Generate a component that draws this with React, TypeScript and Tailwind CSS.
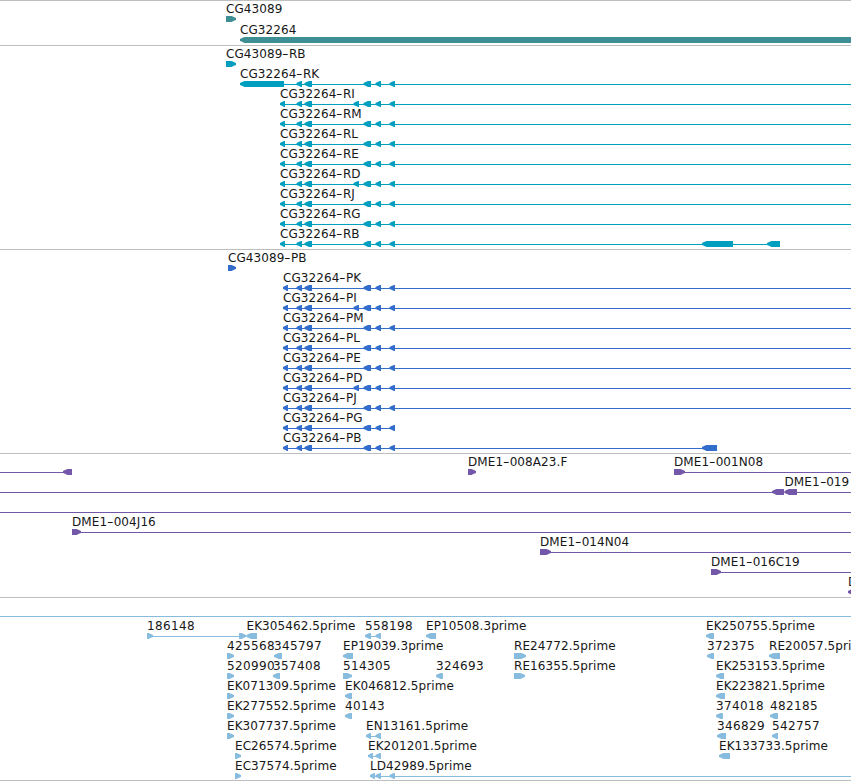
type Direction = "left" | "right";

interface Feature {
  name?: string;
  start: number;
  end?: number;
  direction?: Direction;
  blocks: [number, number][];
}

interface Track {
  id: string;
  color: string;
  rowClass: string;
  trackClass: string;
  rows: Feature[][];
}

const VIEW_WIDTH = 851;

const left = (name: string, ...blocks: [number, number][]): Feature => ({
  name,
  start: blocks[0][0],
  end: blocks[blocks.length - 1][1],
  direction: "left",
  blocks,
});

const right = (name: string, ...blocks: [number, number][]): Feature => ({
  name,
  start: blocks[0][0],
  end: blocks[blocks.length - 1][1],
  direction: "right",
  blocks,
});

// keeps the intron line going past the last visible block
const open = (feature: Feature): Feature => ({ ...feature, end: VIEW_WIDTH });

const line = (start: number, end: number): Feature => ({ start, end, blocks: [] });

const innerExons: [number, number][] = [
  [296.5, 302],
  [304.5, 312],
];
const outerExons: [number, number][] = [
  [363.5, 371],
  [375.5, 381],
  [389.5, 395],
];
const extraExon: [number, number] = [353.5, 359];

const mrna = (name: string) => open(left(name, [280, 285], ...innerExons, ...outerExons));
const mrnaExtra = (name: string) =>
  open(left(name, [280, 285], ...innerExons, extraExon, ...outerExons));
const cds = (name: string) => open(left(name, [283, 288], ...innerExons, ...outerExons));
const cdsExtra = (name: string) =>
  open(left(name, [283, 288], ...innerExons, extraExon, ...outerExons));

const tracks: Track[] = [
  {
    id: "gene",
    color: "text-[#3d8f93]",
    rowClass: "h-[21px]",
    trackClass: "pb-[2px]",
    rows: [[right("CG43089", [226, 236])], [left("CG32264", [240, 860])]],
  },
  {
    id: "mrna",
    color: "text-[#009fbf]",
    rowClass: "h-5",
    trackClass: "pb-[3px]",
    rows: [
      [right("CG43089-RB", [226, 236])],
      [open(left("CG32264-RK", [240, 284], ...innerExons, ...outerExons))],
      [mrnaExtra("CG32264-RI")],
      [mrna("CG32264-RM")],
      [mrna("CG32264-RL")],
      [mrna("CG32264-RE")],
      [mrnaExtra("CG32264-RD")],
      [mrna("CG32264-RJ")],
      [mrna("CG32264-RG")],
      [left("CG32264-RB", [280, 285], ...innerExons, ...outerExons, [702, 733], [767, 780])],
    ],
  },
  {
    id: "cds",
    color: "text-[#326dcc]",
    rowClass: "h-5",
    trackClass: "pb-[3px]",
    rows: [
      [right("CG43089-PB", [228, 236])],
      [cds("CG32264-PK")],
      [cdsExtra("CG32264-PI")],
      [cds("CG32264-PM")],
      [cds("CG32264-PL")],
      [cds("CG32264-PE")],
      [cdsExtra("CG32264-PD")],
      [cds("CG32264-PJ")],
      [left("CG32264-PG", [283, 288], ...innerExons, ...outerExons)],
      [left("CG32264-PB", [283, 288], ...innerExons, ...outerExons, [702, 717])],
    ],
  },
  {
    id: "clones",
    color: "text-[#7357a8]",
    rowClass: "h-5",
    trackClass: "pb-[3px]",
    rows: [
      [
        { start: 0, end: 72, direction: "left", blocks: [[63, 72]] },
        right("DME1-008A23.F", [468, 476]),
        open(right("DME1-001N08", [674, 685])),
      ],
      [
        { start: 0, end: 784, direction: "left", blocks: [[772, 784]] },
        open(left("DME1-019", [784.5, 797])),
      ],
      [line(0, VIEW_WIDTH)],
      [open(right("DME1-004J16", [72, 81]))],
      [open(right("DME1-014N04", [540, 551]))],
      [open(right("DME1-016C19", [711, 721]))],
      [left("D", [848, 860])],
    ],
  },
  {
    id: "est",
    color: "text-[#88bcde]",
    rowClass: "h-5",
    trackClass: "pb-[2px]",
    rows: [
      [line(0, VIEW_WIDTH)],
      [
        right("186148", [147, 153], [239, 246]),
        left("EK305462.5prime", [246.5, 257]),
        left("558198", [365, 371], [375.5, 381]),
        left("EP10508.3prime", [426, 436]),
        left("EK250755.5prime", [706, 714]),
      ],
      [
        right("425568", [227, 234]),
        left("345797", [274, 282]),
        left("EP19039.3prime", [343, 353]),
        right("RE24772.5prime", [514, 526]),
        left("372375", [707, 714]),
        left("RE20057.5prime", [769, 780]),
      ],
      [
        right("520990", [227, 234]),
        left("357408", [273, 280]),
        right("514305", [343, 352]),
        left("324693", [436, 443]),
        right("RE16355.5prime", [514, 525]),
        left("EK253153.5prime", [716, 724]),
      ],
      [
        right("EK071309.5prime", [227, 234]),
        left("EK046812.5prime", [345, 352]),
        left("EK223821.5prime", [716, 725]),
      ],
      [
        right("EK277552.5prime", [227, 234]),
        left("40143", [345, 352]),
        left("374018", [716, 723]),
        left("482185", [770, 778]),
      ],
      [
        right("EK307737.5prime", [227, 234]),
        left("EN13161.5prime", [366, 371], [375.5, 381]),
        left("346829", [717, 726]),
        left("542757", [772, 778]),
      ],
      [
        right("EC26574.5prime", [235, 241]),
        left("EK201201.5prime", [368, 373], [375.5, 381]),
        left("EK133733.5prime", [719, 730]),
      ],
      [
        right("EC37574.5prime", [235, 241]),
        open(left("LD42989.5prime", [370, 375], [375.5, 381], [389.5, 395])),
      ],
    ],
  },
];

function blockPoints([x1, x2]: [number, number], direction?: Direction) {
  const head = Math.min(4.5, x2 - x1 - 1);
  // tip, shoulder and body run from the pointed end to the flat one
  const [tip, flat, step] = direction === "right" ? [x2, x1, -1] : [x1, x2, 1];
  const shoulder = tip + step * 2;
  const body = tip + step * head;
  return `${flat},15 ${body},15 ${shoulder},16 ${tip},17 ${tip},19 ${shoulder},19.7 ${body},21 ${flat},21`;
}

function Label({ name, x }: { name: string; x: number }) {
  const [prefix, suffix] = name.split("-");
  const isNumber = /^\d+$/.test(name);
  return (
    <span
      className={`absolute top-px whitespace-pre text-[12px] leading-[14px] text-neutral-900 ${
        isNumber ? "tracking-[0.35px]" : "tracking-[0.08px]"
      }`}
      style={{ left: x }}
    >
      {prefix}
      {suffix && (
        <>
          <span className="inline-block w-[6.5px] origin-center scale-x-150 text-center">-</span>
          {suffix}
        </>
      )}
    </span>
  );
}

function TrackRow({ features, rowClass }: { features: Feature[]; rowClass: string }) {
  return (
    <div className={`relative overflow-visible ${rowClass}`}>
      <svg className="block h-[21px] w-[851px]" viewBox="0 0 851 21" fill="currentColor">
        {features.map((feature, i) => (
          <g key={i}>
            {feature.end !== undefined && (
              <rect x={feature.start} y={18} width={feature.end - feature.start} height={1} />
            )}
            {feature.blocks.map((block) => (
              <polygon key={block[0]} points={blockPoints(block, feature.direction)} />
            ))}
          </g>
        ))}
      </svg>
      {features.map(
        (feature) =>
          feature.name && <Label key={feature.name} name={feature.name} x={feature.start} />
      )}
    </div>
  );
}

export default function App() {
  return (
    <main className="h-[781px] w-[851px] overflow-hidden bg-white font-['DejaVu_Sans',sans-serif]">
      {tracks.map((track) => (
        <section
          key={track.id}
          className={`border-t border-[#bebebe] ${track.color} ${track.trackClass}`}
        >
          {track.rows.map((features, i) => (
            <TrackRow key={i} features={features} rowClass={track.rowClass} />
          ))}
        </section>
      ))}
      <div className="h-px bg-[#bebebe]" />
    </main>
  );
}
